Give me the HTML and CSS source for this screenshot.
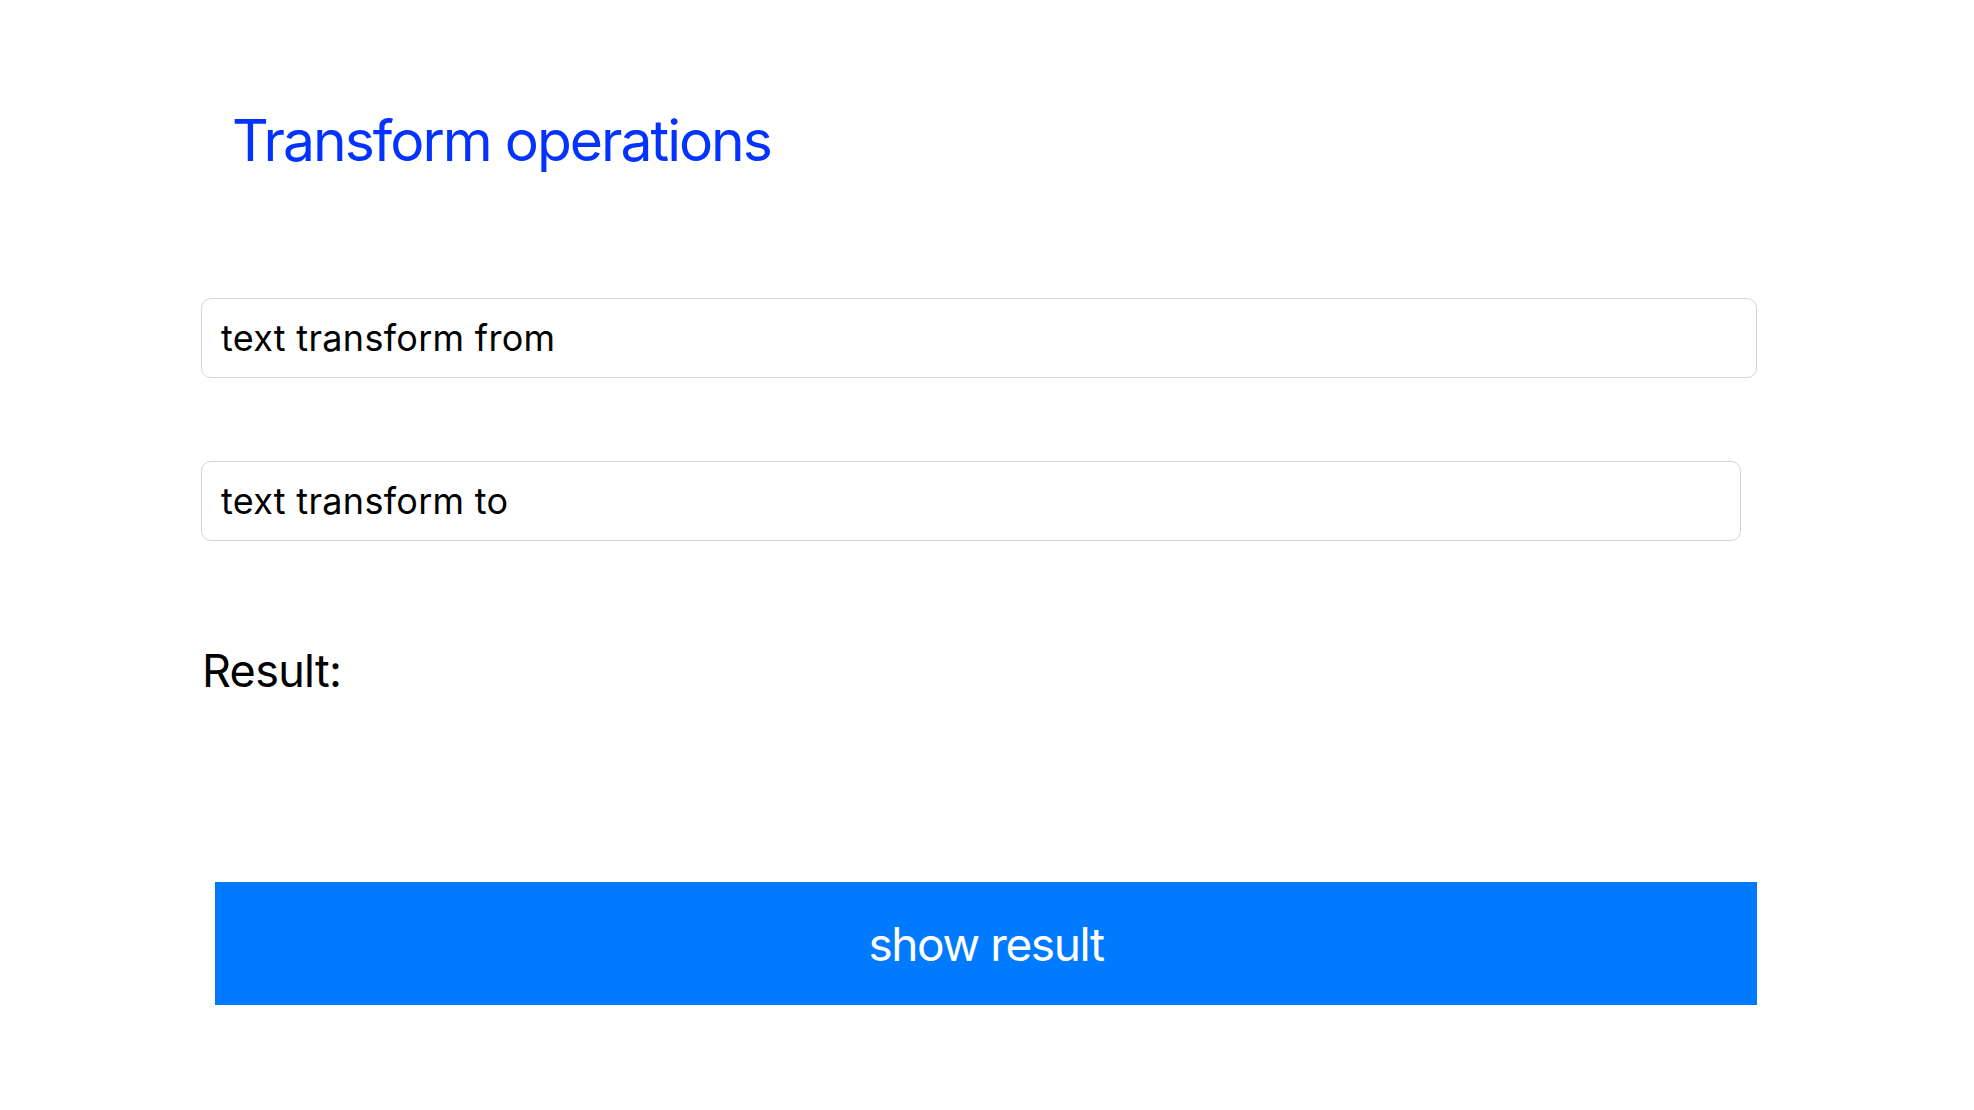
FILE: index.html
```html
<!DOCTYPE html>
<html>
<head>
<meta charset="utf-8">
<link rel="stylesheet" href="styles.css">
</head>
<body>
<main class="page">
  <h1 class="title">Transform operations</h1>
  <div class="field field-from">text transform from</div>
  <div class="field field-to">text transform to</div>
  <div class="result">Result:</div>
  <button class="show-btn">show result</button>
</main>
</body>
</html>
```
FILE: styles.css
```css
html, body {
  margin: 0;
  padding: 0;
  background: #ffffff;
}
body {
  font-family: Inter, "Noto Sans", sans-serif;
  width: 1974px;
  height: 1110px;
  overflow: hidden;
}
.page {
  display: flex;
  flex-direction: column;
  align-items: flex-start;
  padding-left: 201px;
}
.title {
  margin: 105px 0 0 31px;
  font-size: 57px;
  font-weight: 400;
  line-height: 72px;
  color: #0433ff;
  letter-spacing: -2px;
}
.field {
  box-sizing: border-box;
  border: 1px solid #d4d4d4;
  border-radius: 10px;
  height: 80px;
  display: flex;
  align-items: center;
  padding-left: 19px;
  font-size: 36px;
  letter-spacing: 0.3px;
  color: #000;
}
.field-from {
  margin-top: 121px;
  width: 1556px;
}
.field-to {
  margin-top: 83px;
  width: 1540px;
}
.result {
  margin-top: 102px;
  font-size: 45px;
  line-height: 56px;
  letter-spacing: -0.7px;
  color: #000;
  margin-left: 1px;
}
.show-btn {
  margin-top: 183px;
  margin-left: 14px;
  width: 1542px;
  height: 123px;
  border: none;
  border-radius: 0;
  background: #007aff;
  color: #ffffff;
  font-family: Inter, "Noto Sans", sans-serif;
  font-size: 46px;
  letter-spacing: -1.4px;
  padding: 0;
}
```
